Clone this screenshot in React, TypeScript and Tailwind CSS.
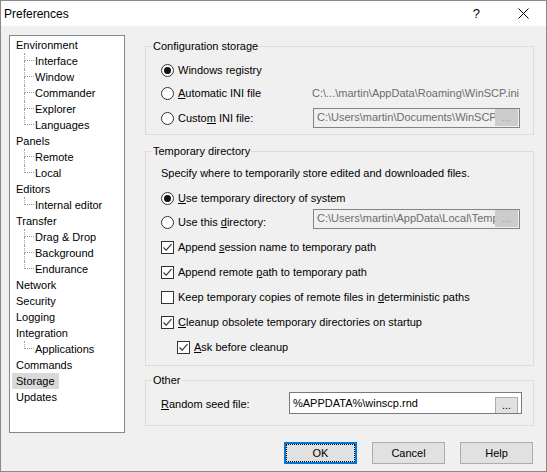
import type { ReactNode } from 'react'

const FONT = { fontFamily: '"Liberation Sans", Arial, sans-serif' }

type TreeItem = { label: string; children?: string[] }

const tree: TreeItem[] = [
  { label: 'Environment', children: ['Interface', 'Window', 'Commander', 'Explorer', 'Languages'] },
  { label: 'Panels', children: ['Remote', 'Local'] },
  { label: 'Editors', children: ['Internal editor'] },
  { label: 'Transfer', children: ['Drag & Drop', 'Background', 'Endurance'] },
  { label: 'Network' },
  { label: 'Security' },
  { label: 'Logging' },
  { label: 'Integration', children: ['Applications'] },
  { label: 'Commands' },
  { label: 'Storage' },
  { label: 'Updates' },
]

function Radio({ checked }: { checked?: boolean }) {
  return (
    <span className="flex h-[13px] w-[13px] shrink-0 items-center justify-center rounded-full border border-[#333333] bg-white">
      {checked && <span className="h-[7px] w-[7px] rounded-full bg-[#111111]" />}
    </span>
  )
}

function Check({ checked }: { checked?: boolean }) {
  return (
    <span className="flex h-[13px] w-[13px] shrink-0 items-center justify-center border border-[#333333] bg-white">
      {checked && (
        <svg width="11" height="11" viewBox="0 0 11 11">
          <path d="M1.5 5.5 L4.2 8.2 L9.5 2.2" fill="none" stroke="#333333" strokeWidth="1.1" />
        </svg>
      )}
    </span>
  )
}

function Group({ title, className, children }: { title: string; className: string; children: ReactNode }) {
  return (
    <fieldset className={`border border-[#dcdcdc] p-0 ${className}`}>
      <legend className="ml-[6px] px-[1px] leading-[14px]">{title}</legend>
      <div className="flex flex-col pl-[15px]">{children}</div>
    </fieldset>
  )
}

function PathBox({ text, disabled, className }: { text: string; disabled?: boolean; className: string }) {
  return (
    <div
      className={`flex items-start overflow-hidden border ${
        disabled ? 'border-[#838383] bg-[#f0f0f0] text-[#6d6d6d]' : 'border-[#7a7a7a] bg-white text-black'
      } ${className}`}
    >
      <span className="flex-1 overflow-hidden whitespace-nowrap pl-[3px]">{text}</span>
      <span
        className={`flex h-[17px] w-[23px] shrink-0 items-center justify-center leading-none ${
          disabled ? 'mt-[0px] mr-[1px] bg-[#cccccc] text-[#a0a0a0]' : 'mt-[2px] mr-[3px] border border-[#adadad] bg-[#e1e1e1] text-black'
        }`}
      >
        ...
      </span>
    </div>
  )
}

function Tree() {
  return (
    <div className="h-[398px] w-[116px] shrink-0 border border-[#828790] bg-white pt-[1px]">
      {tree.map((item) => (
        <div key={item.label}>
          <div className="flex h-[16px] items-center pl-[2px]">
            <span className={`px-[4px] leading-[16px] ${item.label === 'Storage' ? 'bg-[#d9d9d9]' : ''}`}>
              {item.label}
            </span>
          </div>
          {item.children?.map((child, i) => {
            const last = i === item.children!.length - 1
            return (
              <div key={child} className="flex h-[16px] items-center pl-[14px]">
                <div className="flex h-[16px] w-[10px] shrink-0 flex-col">
                  <div className="h-[8px] border-b border-l border-dotted border-[#a0a0a0]" />
                  <div className={`h-[8px] ${last ? '' : 'border-l border-dotted border-[#a0a0a0]'}`} />
                </div>
                <span className="pl-[1px] leading-[16px]">{child}</span>
              </div>
            )
          })}
        </div>
      ))}
    </div>
  )
}

function Button({ label, focused }: { label: string; focused?: boolean }) {
  return (
    <div
      className={`flex h-[22px] w-[73px] items-center justify-center bg-[#e1e1e1] ${
        focused ? 'border-2 border-[#0078d7]' : 'border border-[#adadad]'
      }`}
    >
      {focused ? (
        <span className="flex h-full w-full items-center justify-center border border-dotted border-[#000000]">{label}</span>
      ) : (
        label
      )}
    </div>
  )
}

export default function App() {
  return (
    <div style={FONT} className="flex h-[472px] w-[547px] flex-col border border-[#8a8a8a] bg-[#f0f0f0] text-[11px] text-black">
      <div className="flex h-[25px] shrink-0 items-center bg-white pl-[3px] text-[12px]">
        <span className="flex-1">Preferences</span>
        <span className="mr-[38px] text-[13px]">?</span>
        <svg className="mr-[17px]" width="11" height="11" viewBox="0 0 11 11">
          <path d="M0.5 0.5 L10.5 10.5 M10.5 0.5 L0.5 10.5" stroke="#000" strokeWidth="1" />
        </svg>
      </div>

      <div className="flex flex-1 pl-[8px] pr-[12px]">
        <div className="pt-[9px]">
          <Tree />
        </div>

        <div className="ml-[20px] flex flex-1 flex-col pt-[13px]">
          <Group title="Configuration storage" className="h-[96px]">
            <div className="mt-[10px] flex h-[14px] items-center gap-[4px]">
              <Radio checked />
              <span>Windows registry</span>
            </div>
            <div className="mt-[9px] flex h-[14px] items-center">
              <div className="flex w-[151px] items-center gap-[4px]">
                <Radio />
                <span>
                  <u>A</u>utomatic INI file
                </span>
              </div>
              <span className="whitespace-nowrap text-[#6d6d6d]">C:\...\martin\AppData\Roaming\WinSCP.ini</span>
            </div>
            <div className="mt-[8px] flex h-[20px] items-start">
              <div className="mt-[3px] flex h-[14px] w-[152px] items-center gap-[4px]">
                <Radio />
                <span>
                  Custo<u>m</u> INI file:
                </span>
              </div>
              <PathBox disabled text="C:\Users\martin\Documents\WinSCP.ini" className="h-[20px] w-[207px]" />
            </div>
          </Group>

          <Group title="Temporary directory" className="mt-[9px] h-[222px]">
            <div className="mt-[8px] flex h-[14px] items-center">Specify where to temporarily store edited and downloaded files.</div>
            <div className="mt-[11px] flex h-[14px] items-center gap-[4px]">
              <Radio checked />
              <span>
                <u>U</u>se temporary directory of system
              </span>
            </div>
            <div className="mt-[4px] flex h-[20px] items-start">
              <div className="mt-[6px] flex h-[14px] w-[152px] items-center gap-[4px]">
                <Radio />
                <span>
                  Use this <u>d</u>irectory:
                </span>
              </div>
              <PathBox disabled text="C:\Users\martin\AppData\Local\Temp" className="h-[20px] w-[207px]" />
            </div>
            <div className="mt-[11px] flex h-[14px] items-center gap-[4px]">
              <Check checked />
              <span>
                Append <u>s</u>ession name to temporary path
              </span>
            </div>
            <div className="mt-[11px] flex h-[14px] items-center gap-[4px]">
              <Check checked />
              <span>
                Append remote <u>p</u>ath to temporary path
              </span>
            </div>
            <div className="mt-[11px] flex h-[14px] items-center gap-[4px]">
              <Check />
              <span>
                Keep temporary copies of remote files in <u>d</u>eterministic paths
              </span>
            </div>
            <div className="mt-[11px] flex h-[14px] items-center gap-[4px]">
              <Check checked />
              <span>
                <u>C</u>leanup obsolete temporary directories on startup
              </span>
            </div>
            <div className="mt-[11px] flex h-[14px] items-center gap-[4px] pl-[16px]">
              <Check checked />
              <span>
                <u>A</u>sk before cleanup
              </span>
            </div>
          </Group>

          <Group title="Other" className="mt-[7px] h-[53px]">
            <div className="mt-[5px] flex h-[22px] items-start">
              <div className="mt-[5px] flex h-[14px] w-[128px] items-center">
                <span>
                  <u>R</u>andom seed file:
                </span>
              </div>
              <PathBox text="%APPDATA%\winscp.rnd" className="h-[22px] w-[233px] pt-[2px]" />
            </div>
          </Group>

          <div className="mt-[16px] flex justify-end gap-[15px] pr-[1px]">
            <Button label="OK" focused />
            <Button label="Cancel" />
            <Button label="Help" />
          </div>
        </div>
      </div>
    </div>
  )
}
